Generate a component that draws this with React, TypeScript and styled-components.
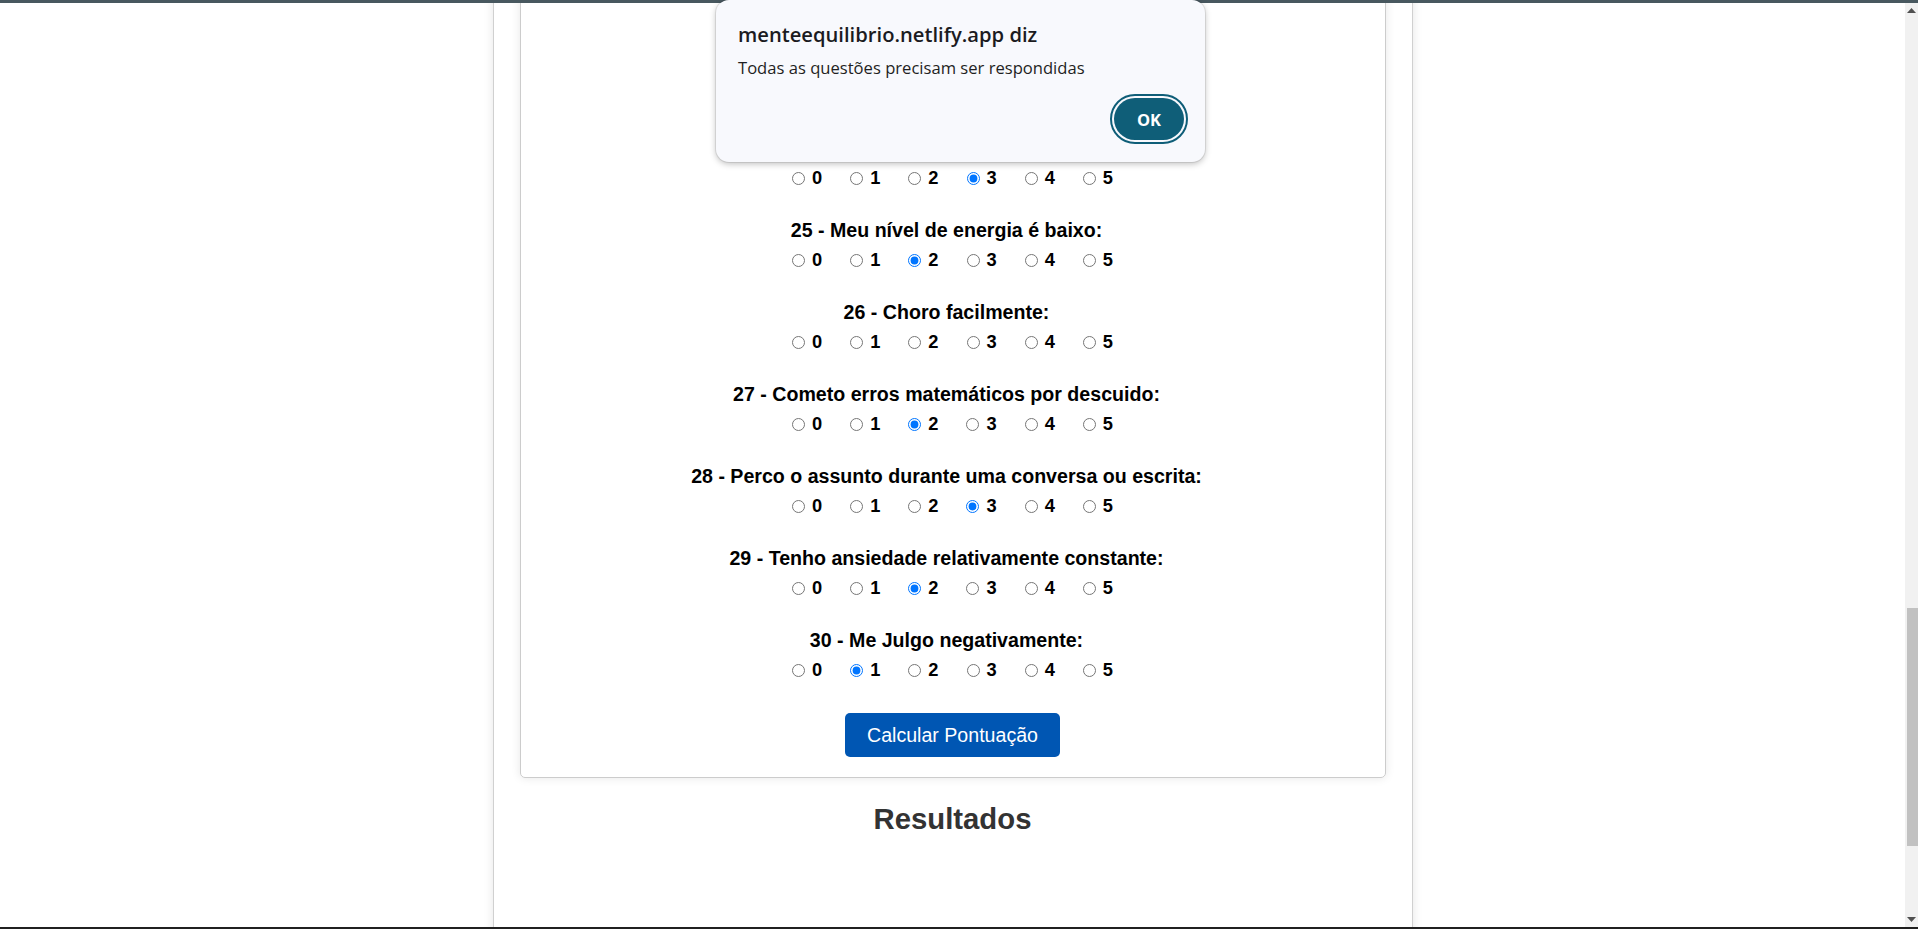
import React from "react";
import styled, { createGlobalStyle } from "styled-components";

const GlobalStyle = createGlobalStyle`
  html, body {
    margin: 0;
    padding: 0;
    background: #ffffff;
    overflow: hidden;
  }
  body {
    font-family: "Liberation Sans", Arial, sans-serif;
  }
`;

const Screen = styled.div`
  position: relative;
  width: 1918px;
  height: 929px;
  display: flex;
  flex-direction: column;
  overflow: hidden;
  background: #ffffff;
`;

const WindowEdge = styled.div<{ $h: number; $color: string }>`
  flex: none;
  height: ${(p) => p.$h}px;
  background: ${(p) => p.$color};
`;

const Main = styled.div`
  flex: 1;
  min-height: 0;
  display: flex;
`;

const Viewport = styled.div`
  flex: 1;
  min-width: 0;
  overflow: hidden;
  background: #ffffff;
`;

const Shell = styled.div`
  width: 920px;
  box-sizing: border-box;
  margin: -154px auto 0;
  border: 1px solid #d0d0d0;
  box-shadow: 0 0 10px rgba(0, 0, 0, 0.1);
  background: #ffffff;
  padding: 20px 26px 300px;
`;

const Card = styled.form`
  border: 1px solid #cccccc;
  border-radius: 5px;
  box-shadow: 0 0 10px rgba(0, 0, 0, 0.1);
  padding: 20px;
  display: flex;
  flex-direction: column;
  align-items: center;
`;

const Question = styled.div`
  display: flex;
  flex-direction: column;
  align-items: center;
  margin-bottom: 30px;
`;

const QuestionTitle = styled.p`
  margin: 0 0 8px;
  padding-right: 12px;
  font-weight: bold;
  font-size: 19.6px;
  line-height: 22px;
  color: #000000;
  white-space: nowrap;
`;

const Options = styled.div`
  display: flex;
  gap: 28px;
  height: 22px;
  align-items: center;
`;

const Option = styled.label`
  display: inline-flex;
  align-items: center;
  font-weight: bold;
  font-size: 18.3px;
  line-height: 22px;
  color: #000000;

  input {
    margin: 0 7px 0 0;
    width: 13px;
    height: 13px;
  }
`;

const SubmitButton = styled.button`
  margin-top: 2px;
  height: 44px;
  padding: 0 22px;
  background: #0056b3;
  color: #ffffff;
  border: none;
  border-radius: 5px;
  font-family: "Liberation Sans", Arial, sans-serif;
  font-size: 19.6px;
`;

const ResultsTitle = styled.h2`
  margin: 24px 0 0;
  text-align: center;
  font-size: 29.3px;
  line-height: 34px;
  color: #333333;
  font-weight: bold;
`;

const Scrollbar = styled.div`
  flex: none;
  width: 13px;
  background: #f1f1f1;
  display: flex;
  flex-direction: column;
`;

const ScrollArrow = styled.div`
  flex: none;
  height: 15px;
  display: flex;
  align-items: center;
  justify-content: center;
`;

const ScrollTrack = styled.div`
  flex: 1;
  display: flex;
  flex-direction: column;
  align-items: flex-end;
`;

const ScrollThumb = styled.div<{ $top: number; $height: number }>`
  margin-top: ${(p) => p.$top}px;
  width: 11px;
  height: ${(p) => p.$height}px;
  background: #c1c1c1;
`;

const Dialog = styled.div`
  position: absolute;
  top: 0;
  left: 716px;
  width: 489px;
  height: 162px;
  box-sizing: border-box;
  background: #f8f9fd;
  border-radius: 13px;
  box-shadow: 0 0 0 1px rgba(0, 0, 0, 0.08), 0 2px 6px rgba(0, 0, 0, 0.25);
  padding: 20px 21px 22px 22px;
  display: flex;
  flex-direction: column;
  font-family: "Open Sans", "Noto Sans", sans-serif;
`;

const DialogTitle = styled.div`
  font-size: 20.2px;
  font-weight: 600;
  line-height: 28px;
  color: #1b1b1f;
`;

const DialogMessage = styled.div`
  margin-top: 9px;
  font-size: 16.6px;
  line-height: 22px;
  color: #1f1f23;
`;

const DialogFooter = styled.div`
  margin-top: auto;
  display: flex;
  justify-content: flex-end;
`;

const OkButton = styled.button`
  width: 70px;
  height: 42px;
  border: none;
  border-radius: 999px;
  background: #0f5e78;
  color: #ffffff;
  font-family: "Open Sans", "Noto Sans", sans-serif;
  font-weight: 700;
  font-size: 16.5px;
  outline: 2px solid #0f5e78;
  outline-offset: 2px;
`;

type Q = { n: number; text: string; value: number | null };

const questions: Q[] = [
  { n: 21, text: "Sinto-me inquieto:", value: 1 },
  { n: 22, text: "Tenho dificuldade de concentração:", value: 2 },
  { n: 23, text: "Esqueço compromissos:", value: 1 },
  { n: 24, text: "Sinto-me desmotivado:", value: 3 },
  { n: 25, text: "Meu nível de energia é baixo:", value: 2 },
  { n: 26, text: "Choro facilmente:", value: null },
  { n: 27, text: "Cometo erros matemáticos por descuido:", value: 2 },
  { n: 28, text: "Perco o assunto durante uma conversa ou escrita:", value: 3 },
  { n: 29, text: "Tenho ansiedade relativamente constante:", value: 2 },
  { n: 30, text: "Me Julgo negativamente:", value: 1 },
];

const Triangle = ({ up }: { up: boolean }) => (
  <svg width="9" height="5" viewBox="0 0 9 5">
    <polygon points={up ? "0,5 9,5 4.5,0" : "0,0 9,0 4.5,5"} fill="#505050" />
  </svg>
);

export default function App() {
  return (
    <>
      <GlobalStyle />
      <Screen>
        <WindowEdge $h={3} $color="#48585f" />
        <Main>
          <Viewport>
            <Shell>
              <Card onSubmit={(e) => e.preventDefault()}>
                {questions.map((q) => (
                  <Question key={q.n}>
                    <QuestionTitle>
                      {q.n} - {q.text}
                    </QuestionTitle>
                    <Options>
                      {[0, 1, 2, 3, 4, 5].map((v) => (
                        <Option key={v}>
                          <input
                            type="radio"
                            name={`q${q.n}`}
                            value={v}
                            defaultChecked={q.value === v}
                          />
                          {v}
                        </Option>
                      ))}
                    </Options>
                  </Question>
                ))}
                <SubmitButton type="submit">Calcular Pontuação</SubmitButton>
              </Card>
              <ResultsTitle>Resultados</ResultsTitle>
            </Shell>
          </Viewport>
          <Scrollbar>
            <ScrollArrow>
              <Triangle up />
            </ScrollArrow>
            <ScrollTrack>
              <ScrollThumb $top={590} $height={238} />
            </ScrollTrack>
            <ScrollArrow>
              <Triangle up={false} />
            </ScrollArrow>
          </Scrollbar>
        </Main>
        <WindowEdge $h={2} $color="#202020" />
        <Dialog role="alertdialog">
          <DialogTitle>menteequilibrio.netlify.app diz</DialogTitle>
          <DialogMessage>Todas as questões precisam ser respondidas</DialogMessage>
          <DialogFooter>
            <OkButton type="button">OK</OkButton>
          </DialogFooter>
        </Dialog>
      </Screen>
    </>
  );
}
